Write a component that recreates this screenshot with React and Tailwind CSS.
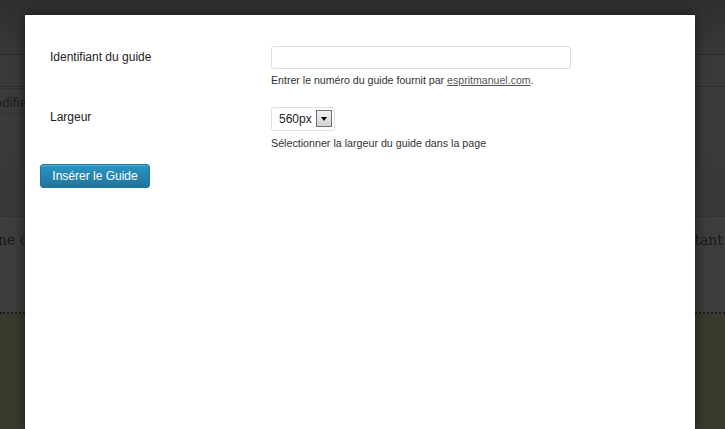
import { useState } from 'react'

function Backdrop() {
  return (
    <div className="flex flex-col h-full bg-[#3c3c3c]">
      {/* barre du haut */}
      <div className="h-[55px] bg-gradient-to-b from-[#2f2f2f] to-[#383838] border-b border-[#2c2c2c]" />
      <div className="h-[32px] bg-[#3a3a3a] border-b border-[#2e2e2e]" />
      <div className="h-[27px] flex items-center bg-[#3b3b3b]">
        <div className="h-[26px] px-1 pt-[4px] flex items-center border border-[#333] text-[12px] text-[#1c1c1c] -ml-[21px]">
          Modifier
        </div>
      </div>
      <div className="h-[42px] bg-[#3b3b3b] border-b border-[#353535]" />
      <div className="h-[16px] bg-[#3a3a3a] border-b border-[#353535]" />
      <div className="h-[45px] bg-[#393939] border-b border-[#333]" />
      <div className="h-[97px] bg-[#3d3d3d] flex justify-between pt-[13px] font-['DejaVu_Serif',serif] text-[14px] text-[#1a1a1a] border-b-2 border-dotted border-[#1e1a17]">
        <span className="-ml-[2px]">ne c</span>
        <span className="mr-[2px]">tant</span>
      </div>
      <div className="flex-1 bg-[#3a3b2d]" />
    </div>
  )
}

function Modal() {
  const [guideId, setGuideId] = useState('')
  const [width, setWidth] = useState('560px')

  return (
    <div className="absolute left-[25px] top-[15px] w-[670px] h-[414px] bg-white shadow-[0_0_12px_rgba(0,0,0,0.6)] font-['Liberation_Sans',Arial,sans-serif]">
      <div className="pt-[31px] pl-[25px] flex flex-col">
        <div className="flex">
          <label className="w-[221px] text-[12px] text-[#222] pt-[2px]">Identifiant du guide</label>
          <div className="flex flex-col">
            <input
              value={guideId}
              onChange={(e) => setGuideId(e.target.value)}
              className="w-[300px] h-[23px] border border-[#dfdfdf] rounded-[3px] px-1 text-[12px] outline-none"
            />
            <p className="mt-[4px] text-[10.6px] text-[#333]">
              Entrer le numéro du guide fournit par <a className="text-[#555] underline">espritmanuel.com</a>.
            </p>
          </div>
        </div>

        <div className="flex mt-[18px]">
          <label className="w-[221px] text-[12px] text-[#222] pt-[1px]">Largeur</label>
          <div className="flex flex-col">
            <div className="w-[64px] h-[24px] border border-[#dfdfdf] rounded-[3px] flex items-center pl-[7px] pr-[2px] justify-between">
              <span className="text-[12px] text-[#222]">{width}</span>
              <span className="w-[16px] h-[17px] border border-[#707070] bg-gradient-to-b from-[#f2f2f2] to-[#d4d4d4] flex items-center justify-center">
                <span className="w-0 h-0 border-l-[3.5px] border-r-[3.5px] border-t-[4px] border-l-transparent border-r-transparent border-t-black" />
              </span>
            </div>
            <p className="mt-[4px] text-[10.7px] text-[#333]" onClick={() => setWidth('560px')}>
              Sélectionner la largeur du guide dans la page
            </p>
          </div>
        </div>

        <div className="mt-[12px] -ml-[10px]">
          <button className="w-[110px] h-[24px] rounded-[3px] border border-[#21759b] bg-gradient-to-b from-[#2a95c5] to-[#21759b] text-white text-[12px] shadow-[inset_0_1px_0_rgba(120,200,230,0.5)]">
            Insérer le Guide
          </button>
        </div>
      </div>
    </div>
  )
}

export default function App() {
  return (
    <div className="relative w-full h-[429px] overflow-hidden">
      <Backdrop />
      <Modal />
    </div>
  )
}
